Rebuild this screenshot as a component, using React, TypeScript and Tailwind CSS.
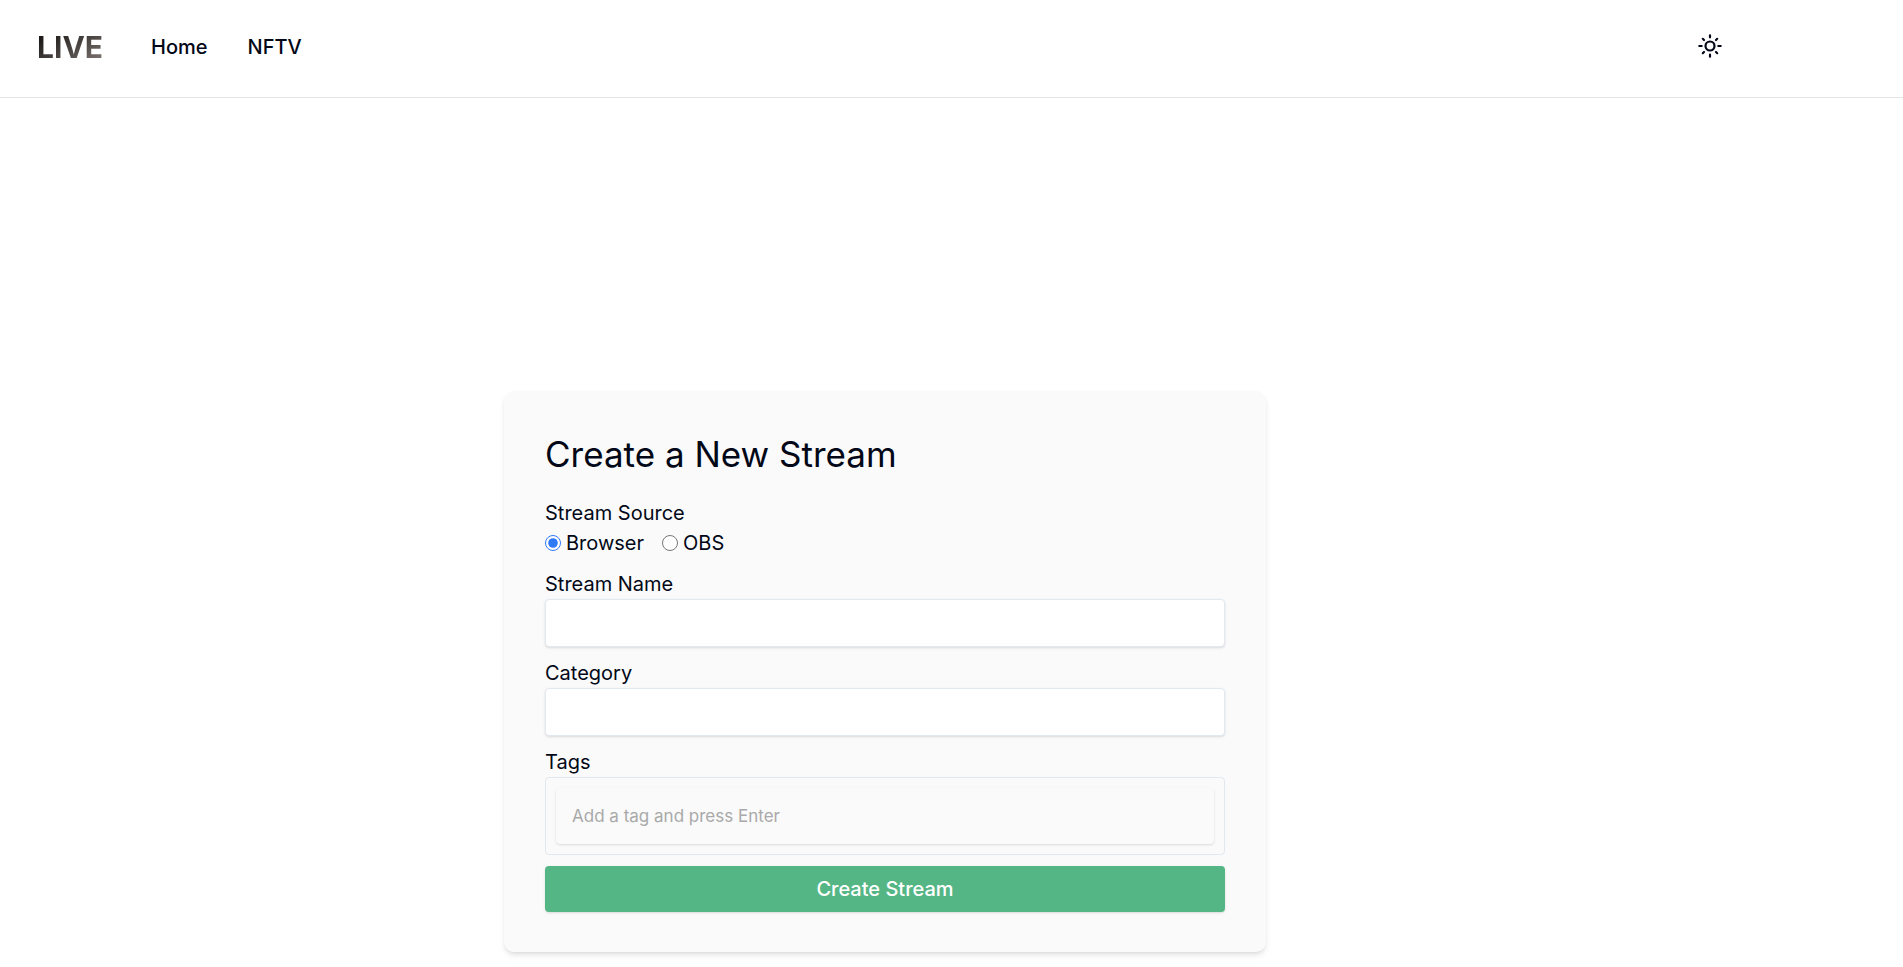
import { useState } from "react";
import type { InputHTMLAttributes } from "react";

function SunIcon() {
  return (
    <svg
      viewBox="0 0 24 24"
      className="size-6"
      fill="none"
      stroke="currentColor"
      strokeWidth="2.2"
      strokeLinecap="round"
      aria-hidden="true"
    >
      <circle cx="12" cy="12" r="4.5" />
      <path d="M12 1.3v2M12 20.7v2M1.3 12h2.4M20.3 12h2.4M4.8 4.8l1.2 1.2M18 18l1.2 1.2M4.8 19.2L6 18M18 6l1.2-1.2" />
    </svg>
  );
}

function Header() {
  return (
    <header className="flex h-[98px] items-center border-b border-[#e4e4e7] pr-[181px] pb-1 pl-[37px]">
      <a
        href="#"
        className="bg-linear-to-br from-[#0c0a09] to-[#8a817c] bg-clip-text text-[30px] leading-10 font-bold text-transparent"
      >
        LIVE
      </a>
      <nav className="ml-12 flex gap-10 text-xl leading-8 font-medium">
        <a href="#home">Home</a>
        <a href="#nftv">NFTV</a>
      </nav>
      <button type="button" aria-label="Toggle theme" className="ml-auto pb-0.5">
        <SunIcon />
      </button>
    </header>
  );
}

function TextField({ label, id, ...rest }: { label: string; id: string } & InputHTMLAttributes<HTMLInputElement>) {
  return (
    <div className="flex flex-col">
      <label htmlFor={id}>{label}</label>
      <input
        id={id}
        className="h-12 rounded border border-[#e2e8f0] bg-white px-3 shadow outline-none"
        {...rest}
      />
    </div>
  );
}

export default function App() {
  const [source, setSource] = useState("Browser");
  return (
    <div className="min-h-screen bg-white font-['Inter',sans-serif] text-[#020817]">
      <Header />
      <main className="flex justify-center pt-[293px] pr-[133px] pb-3">
        <form
          className="w-full max-w-[762px] rounded-[10px] bg-[#fafafa] px-[41px] py-10 text-xl leading-[30px] shadow-md"
          onSubmit={(e) => e.preventDefault()}
        >
          <h1 className="mb-5 text-[35px] leading-[47px]">Create a New Stream</h1>
          <div className="flex flex-col gap-[11px]">
            <fieldset>
              <legend>Stream Source</legend>
              <div className="flex gap-[18px]">
                {["Browser", "OBS"].map((name) => (
                  <label key={name} className="flex items-center gap-[5px]">
                    <input
                      type="radio"
                      name="source"
                      className="size-4 accent-[#2f78f6]"
                      checked={source === name}
                      onChange={() => setSource(name)}
                    />
                    {name}
                  </label>
                ))}
              </div>
            </fieldset>
            <TextField label="Stream Name" id="name" />
            <TextField label="Category" id="category" />
            <div className="flex flex-col">
              <label htmlFor="tags">Tags</label>
              <div className="flex rounded border border-[#e2e8f0] p-[10px]">
                <input
                  id="tags"
                  placeholder="Add a tag and press Enter"
                  className="h-14 w-full rounded bg-[#fafafa] px-4 text-[17px] shadow outline-none placeholder:text-[#a9a9a9]"
                />
              </div>
            </div>
            <button type="submit" className="h-[46px] rounded bg-[#55b685] font-medium text-white shadow-sm">
              Create Stream
            </button>
          </div>
        </form>
      </main>
    </div>
  );
}
